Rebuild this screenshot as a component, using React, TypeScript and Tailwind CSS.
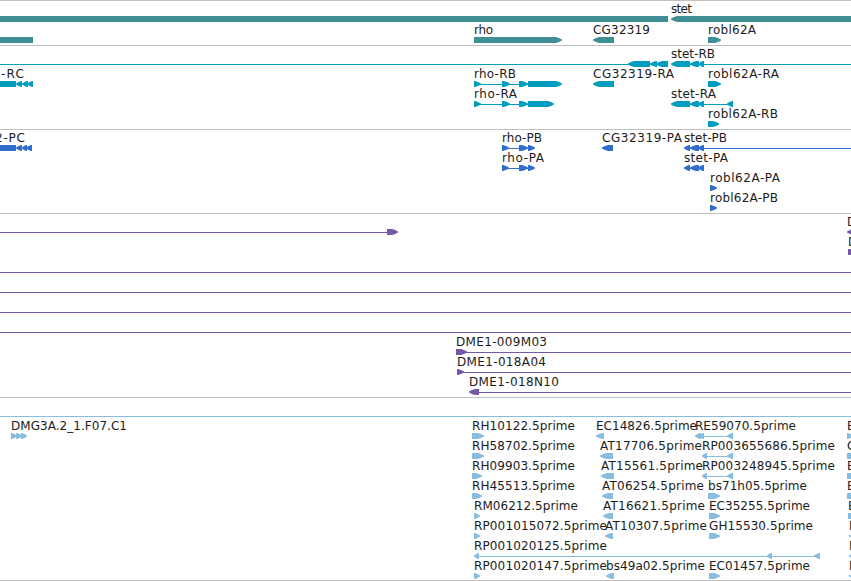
import React from 'react'
import clsx from 'clsx'

type Dir = 'left' | 'right' | 'none'
type Exon = [start: number, end: number, dir?: Dir]

interface Feature {
  // top of the feature's glyph, measured from the top of its track
  y: number
  dir: Dir
  label?: string
  labelX?: number
  labelWidth?: number
  exons?: Exon[]
  intron?: [number, number]
}

interface Track {
  id: string
  height: string
  color: string
  features: Feature[]
}

const genes: Feature[] = [
  { y: 16, dir: 'none', exons: [[0, 668]] },
  { y: 16, dir: 'left', label: 'stet', labelX: 671, labelWidth: 21, exons: [[671, 870]] },
  { y: 37, dir: 'none', exons: [[0, 33]] },
  { y: 37, dir: 'right', label: 'rho', labelX: 474, labelWidth: 19, exons: [[474, 562]] },
  { y: 37, dir: 'left', label: 'CG32319', labelX: 593, labelWidth: 57, exons: [[593, 614]] },
  { y: 37, dir: 'right', label: 'robl62A', labelX: 708, labelWidth: 48, exons: [[708, 721]] },
]

const transcripts: Feature[] = [
  { y: 16, dir: 'left', intron: [0, 660], exons: [[628, 650], [650, 657], [656, 668]] },
  { y: 16, dir: 'left', label: 'stet-RB', labelX: 671, labelWidth: 44, intron: [680, 851], exons: [[671, 690], [690, 699], [698, 704]] },
  { y: 36, dir: 'left', label: '-RC', labelX: 1, labelWidth: 23, exons: [[0, 16, 'none'], [16, 22], [22, 28], [27, 33]] },
  { y: 36, dir: 'right', label: 'rho-RB', labelX: 474, labelWidth: 42, intron: [475, 530], exons: [[474, 481], [502, 510], [519, 528], [528, 562]] },
  { y: 36, dir: 'left', label: 'CG32319-RA', labelX: 593, labelWidth: 81, exons: [[593, 614]] },
  { y: 36, dir: 'right', label: 'robl62A-RA', labelX: 708, labelWidth: 71, exons: [[708, 721]] },
  { y: 56, dir: 'right', label: 'rho-RA', labelX: 474, labelWidth: 43, intron: [475, 530], exons: [[474, 481], [502, 510], [519, 528], [528, 554]] },
  { y: 56, dir: 'left', label: 'stet-RA', labelX: 671, labelWidth: 45, intron: [680, 732], exons: [[671, 690], [690, 699], [698, 704], [727, 733]] },
  { y: 76, dir: 'right', label: 'robl62A-RB', labelX: 708, labelWidth: 70, exons: [[708, 719]] },
]

const proteins: Feature[] = [
  { y: 16, dir: 'left', label: '2-PC', labelX: -5, labelWidth: 30, exons: [[0, 16, 'none'], [16, 22], [22, 27], [26, 32]] },
  { y: 16, dir: 'right', label: 'rho-PB', labelX: 502, labelWidth: 40, intron: [503, 530], exons: [[502, 509], [519, 528], [528, 535]] },
  { y: 16, dir: 'left', label: 'CG32319-PA', labelX: 602, labelWidth: 80, exons: [[602, 613]] },
  { y: 16, dir: 'left', label: 'stet-PB', labelX: 684, labelWidth: 43, intron: [686, 851], exons: [[684, 690], [690, 699], [698, 704]] },
  { y: 36, dir: 'right', label: 'rho-PA', labelX: 502, labelWidth: 42, intron: [503, 530], exons: [[502, 509], [519, 528], [528, 535]] },
  { y: 36, dir: 'left', label: 'stet-PA', labelX: 684, labelWidth: 44, intron: [686, 702], exons: [[684, 690], [690, 699], [698, 704]] },
  { y: 56, dir: 'right', label: 'robl62A-PA', labelX: 710, labelWidth: 70, exons: [[710, 717]] },
  { y: 76, dir: 'right', label: 'robl62A-PB', labelX: 710, labelWidth: 68, exons: [[710, 717]] },
]

const cdnas: Feature[] = [
  { y: 16, dir: 'right', intron: [0, 388], exons: [[387, 398]] },
  { y: 16, dir: 'left', label: 'D', labelX: 847, exons: [[847, 857]] },
  { y: 36, dir: 'right', label: 'D', labelX: 848, exons: [[848, 856]] },
  { y: 56, dir: 'none', intron: [0, 851] },
  { y: 76, dir: 'none', intron: [0, 851] },
  { y: 96, dir: 'none', intron: [0, 851] },
  { y: 116, dir: 'none', intron: [0, 851] },
  { y: 136, dir: 'right', label: 'DME1-009M03', labelX: 456, labelWidth: 91, intron: [460, 851], exons: [[456, 467]] },
  { y: 156, dir: 'right', label: 'DME1-018A04', labelX: 457, labelWidth: 89, intron: [460, 851], exons: [[457, 464]] },
  { y: 176, dir: 'left', label: 'DME1-018N10', labelX: 469, labelWidth: 90, intron: [475, 851], exons: [[469, 479]] },
]

const ests: Feature[] = [
  { y: 16, dir: 'none', intron: [0, 851] },
  { y: 36, dir: 'right', label: 'DMG3A.2_1.F07.C1', labelX: 11, labelWidth: 116, exons: [[11, 17], [16, 22], [21, 27]] },

  { y: 36, dir: 'right', label: 'RH10122.5prime', labelX: 472, labelWidth: 103, exons: [[472, 484]] },
  { y: 56, dir: 'right', label: 'RH58702.5prime', labelX: 472, labelWidth: 103, exons: [[472, 484]] },
  { y: 76, dir: 'right', label: 'RH09903.5prime', labelX: 472, labelWidth: 103, exons: [[472, 482]] },
  { y: 96, dir: 'right', label: 'RH45513.5prime', labelX: 472, labelWidth: 103, exons: [[472, 482]] },
  { y: 116, dir: 'right', label: 'RM06212.5prime', labelX: 474, labelWidth: 104, exons: [[474, 480]] },
  { y: 136, dir: 'right', label: 'RP001015072.5prime', labelX: 474, labelWidth: 133, exons: [[474, 480]] },
  { y: 156, dir: 'left', label: 'RP001020125.5prime', labelX: 474, labelWidth: 133, intron: [477, 820], exons: [[474, 479], [767, 772], [814, 820]] },
  { y: 176, dir: 'right', label: 'RP001020147.5prime', labelX: 474, labelWidth: 133, exons: [[474, 480]] },

  { y: 36, dir: 'left', label: 'EC14826.5prime', labelX: 596, labelWidth: 101, exons: [[596, 604]] },
  { y: 56, dir: 'left', label: 'AT17706.5prime', labelX: 600, labelWidth: 102, exons: [[600, 613]] },
  { y: 76, dir: 'left', label: 'AT15561.5prime', labelX: 601, labelWidth: 102, exons: [[601, 614]] },
  { y: 96, dir: 'left', label: 'AT06254.5prime', labelX: 602, labelWidth: 102, exons: [[602, 613]] },
  { y: 116, dir: 'left', label: 'AT16621.5prime', labelX: 603, labelWidth: 102, exons: [[603, 613]] },
  { y: 136, dir: 'left', label: 'AT10307.5prime', labelX: 605, labelWidth: 102, exons: [[605, 613]] },
  { y: 176, dir: 'left', label: 'bs49a02.5prime', labelX: 606, labelWidth: 99, exons: [[606, 614]] },

  { y: 36, dir: 'left', label: 'RE59070.5prime', labelX: 695, labelWidth: 101, intron: [700, 732], exons: [[695, 701], [699, 704], [727, 733]] },
  { y: 56, dir: 'left', label: 'RP003655686.5prime', labelX: 702, labelWidth: 133, intron: [705, 732], exons: [[702, 707], [727, 733]] },
  { y: 76, dir: 'left', label: 'RP003248945.5prime', labelX: 702, labelWidth: 133, intron: [705, 732], exons: [[702, 707], [727, 733]] },
  { y: 96, dir: 'right', label: 'bs71h05.5prime', labelX: 708, labelWidth: 99, exons: [[708, 720]] },
  { y: 116, dir: 'right', label: 'EC35255.5prime', labelX: 709, labelWidth: 101, exons: [[709, 720]] },
  { y: 136, dir: 'right', label: 'GH15530.5prime', labelX: 709, labelWidth: 104, exons: [[709, 720]] },
  { y: 176, dir: 'right', label: 'EC01457.5prime', labelX: 709, labelWidth: 101, exons: [[709, 720]] },

  { y: 36, dir: 'right', label: 'E', labelX: 847, exons: [[847, 853]] },
  { y: 56, dir: 'right', label: 'G', labelX: 847, exons: [[847, 860]] },
  { y: 76, dir: 'right', label: 'E', labelX: 847, exons: [[847, 860]] },
  { y: 96, dir: 'right', label: 'E', labelX: 847, exons: [[847, 860]] },
  { y: 116, dir: 'right', label: 'E', labelX: 848, exons: [[848, 860]] },
  { y: 136, dir: 'left', label: 'R', labelX: 849, exons: [[849, 860]] },
  { y: 156, dir: 'left', label: 'R', labelX: 849, exons: [[849, 860]] },
  { y: 176, dir: 'left', label: 'R', labelX: 849, exons: [[849, 860]] },
]

const tracks: Track[] = [
  { id: 'genes', height: 'h-[45px]', color: 'text-[#408f94]', features: genes },
  { id: 'transcripts', height: 'h-[84px]', color: 'text-[#009dbf]', features: transcripts },
  { id: 'proteins', height: 'h-[84px]', color: 'text-[#306dcc]', features: proteins },
  { id: 'cdnas', height: 'h-[184px]', color: 'text-[#7658a8]', features: cdnas },
  { id: 'ests', height: 'h-[183px]', color: 'text-[#88bddf]', features: ests },
]

const GLYPH_HEIGHT = 6
const HEAD = 6

// the head bulges halfway and ends in a one pixel tip, so it stays visible on the narrow exons
const exonPoints = (start: number, end: number, y: number, dir: Dir) => {
  const bottom = y + GLYPH_HEIGHT
  if (dir === 'none') return `${start},${y} ${end},${y} ${end},${bottom} ${start},${bottom}`

  const tail = dir === 'right' ? start : end
  const tip = dir === 'right' ? end : start
  const sign = dir === 'right' ? -1 : 1
  const head = Math.min(HEAD, end - start - 1)
  const neck = tip + sign * head
  const bulge = tip + sign * head * 0.5
  return [
    `${tail},${y} ${neck},${y} ${bulge},${y + 0.9}`,
    `${tip},${y + 2.5} ${tip},${y + 3.5}`,
    `${bulge},${bottom - 0.9} ${neck},${bottom} ${tail},${bottom}`,
  ].join(' ')
}

const FeatureGlyph: React.FC<{ feature: Feature }> = ({ feature }) => {
  const { y, dir, label, labelX, labelWidth, exons = [], intron } = feature
  return (
    <g>
      {intron && <rect x={intron[0]} y={y + 3} width={intron[1] - intron[0]} height={1} fill="currentColor" />}
      {exons.map(([start, end, exonDir]) => (
        <polygon key={start} points={exonPoints(start, end, y, exonDir ?? dir)} fill="currentColor" />
      ))}
      {label && (
        <text x={labelX} y={y - 3} textLength={labelWidth} className="fill-[#1c1c1c]">
          {label}
        </text>
      )}
    </g>
  )
}

const TrackRow: React.FC<{ track: Track }> = ({ track }) => (
  <section className={clsx('w-full shrink-0 border-t border-[#c0c0c0]', track.height, track.color)}>
    {/* pulled up under the rule so that y is counted from the track's top edge */}
    <svg className="-mt-px block h-full w-full overflow-hidden text-[12px]">
      {track.features.map((feature, i) => (
        <FeatureGlyph key={i} feature={feature} />
      ))}
    </svg>
  </section>
)

export default function App() {
  return (
    <main className="flex h-[581px] w-[851px] flex-col overflow-hidden border-b border-[#c0c0c0] bg-white font-['DejaVu_Sans',sans-serif]">
      {tracks.map((track) => (
        <TrackRow key={track.id} track={track} />
      ))}
    </main>
  )
}
